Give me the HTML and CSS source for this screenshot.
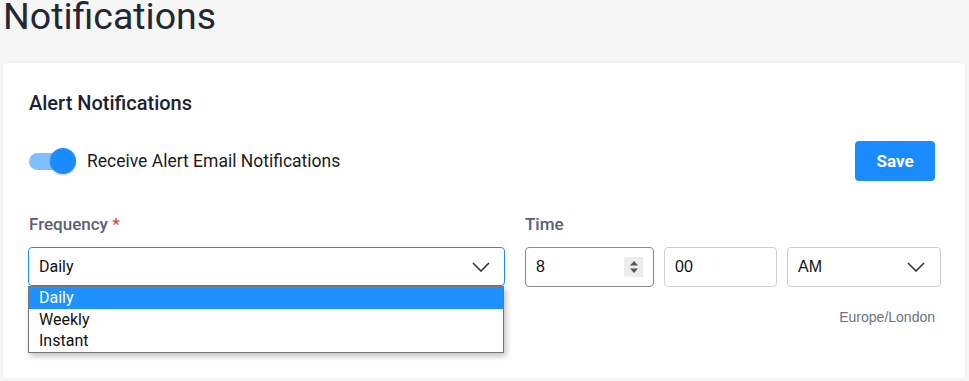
FILE: index.html
```html
<!DOCTYPE html>
<html lang="en">
<head>
    <meta charset="UTF-8">
    <meta name="viewport" content="width=device-width, initial-scale=1.0">
    <title>Notifications</title>
    <link rel="stylesheet" href="styles.css">
</head>
<body>
    <div class="page">
        <h1 class="page-title">Notifications</h1>

        <div class="card">
            <h2 class="card-title">Alert Notifications</h2>

            <!-- Переключатель + кнопка -->
            <div class="toggle-row">
                <label class="switch">
                    <span class="switch-track"></span>
                    <span class="switch-thumb"></span>
                </label>
                <span class="switch-label">Receive Alert Email Notifications</span>
                <button class="save-button">Save</button>
            </div>

            <div class="fields">
                <div class="field">
                    <div class="field-label">Frequency <span class="required">*</span></div>
                    <div class="select-wrap">
                        <div class="select select-open">
                            <span>Daily</span>
                            <svg class="chevron" width="18" height="10" viewBox="0 0 18 10"><path d="M1 1l8 8 8-8" fill="none" stroke="#333" stroke-width="1.6"/></svg>
                        </div>
                        <ul class="dropdown">
                            <li class="active">Daily</li>
                            <li>Weekly</li>
                            <li>Instant</li>
                        </ul>
                    </div>
                </div>

                <div class="field">
                    <div class="field-label">Time</div>
                    <div class="time-row">
                        <div class="input input-hour">
                            <span>8</span>
                            <span class="spinner">
                                <svg width="10" height="14" viewBox="0 0 10 14"><path d="M5 1L9 5.5H1z M5 13L1 8.5h8z" fill="#555"/></svg>
                            </span>
                        </div>
                        <div class="input input-min"><span>00</span></div>
                        <div class="input input-ampm">
                            <span>AM</span>
                            <svg class="chevron" width="18" height="10" viewBox="0 0 18 10"><path d="M1 1l8 8 8-8" fill="none" stroke="#333" stroke-width="1.6"/></svg>
                        </div>
                    </div>
                    <div class="timezone">Europe/London</div>
                </div>
            </div>
        </div>
    </div>
</body>
</html>
```

FILE: styles.css
```css
:root {
    --primary-color: #1a8cff;
    --track-color: #80bfff;
    --text-color: #1f2430;
    --label-color: #5b6075;
    --border-color: #cfcfcf;
    --background-color: #f6f6f6;
}

body {
    font-family: 'Roboto', sans-serif;
    margin: 0;
    padding: 0;
    background-color: var(--background-color);
    color: var(--text-color);
}

.page {
    padding: 0 4px 0 3px;
}

.page-title {
    margin: 0;
    padding-top: 1px;
    font-size: 37.5px;
    font-weight: 400;
    line-height: 30px;
    height: 62px;
    color: #222731;
}

/* Карточка */
.card {
    background: white;
    border-radius: 4px;
    box-shadow: 0 0 3px rgba(0,0,0,0.08);
    padding: 26px 26px 0 26px;
    height: 289px;
}

.card-title {
    margin: 0;
    font-size: 20px;
    font-weight: 500;
    line-height: 28px;
    color: #1c2230;
}

.toggle-row {
    display: flex;
    align-items: center;
    margin-top: 24px;
    height: 40px;
}

.switch {
    position: relative;
    width: 48px;
    height: 26px;
    margin-right: 10px;
}

.switch-track {
    position: absolute;
    left: 0;
    top: 5px;
    width: 40px;
    height: 17px;
    border-radius: 9px;
    background: var(--track-color);
}

.switch-thumb {
    position: absolute;
    left: 21px;
    top: 0;
    width: 26px;
    height: 26px;
    border-radius: 50%;
    background: var(--primary-color);
    box-shadow: 0 1px 2px rgba(0,0,0,0.25);
}

.switch-label {
    font-size: 17.5px;
    color: #1b1b1b;
}

.save-button {
    margin-left: auto;
    margin-right: 4px;
    width: 80px;
    height: 40px;
    background: var(--primary-color);
    color: white;
    border: none;
    border-radius: 4px;
    font-family: 'Roboto', sans-serif;
    font-size: 17px;
    font-weight: 700;
}

/* Поля */
.fields {
    display: grid;
    grid-template-columns: 476px 416px;
    gap: 20px;
    margin-top: 31px;
}

.field-label {
    font-size: 17px;
    line-height: 24px;
    color: var(--label-color);
    margin-bottom: 11px;
    font-weight: 500;
}

.required {
    color: #e53935;
}

.select-wrap {
    position: relative;
    margin-left: -1px;
}

.select,
.input {
    box-sizing: border-box;
    display: flex;
    align-items: center;
    justify-content: space-between;
    height: 40px;
    padding: 0 14px 0 10px;
    border: 1px solid var(--border-color);
    border-radius: 4px;
    background: white;
    font-size: 16px;
    color: #111;
}

.select-open {
    border-color: var(--primary-color);
    height: 39px;
}

.dropdown {
    position: absolute;
    top: 39px;
    left: 0;
    width: 476px;
    box-sizing: border-box;
    margin: 0;
    padding: 0;
    list-style: none;
    background: white;
    border: 1px solid #767676;
    box-shadow: 2px 3px 6px rgba(0,0,0,0.25);
    z-index: 2;
}

.dropdown li {
    height: 21.7px;
    line-height: 21px;
    padding-left: 10px;
    font-size: 16px;
    color: #111;
}

.dropdown li.active {
    background: #1e90ff;
    color: white;
}

.time-row {
    display: flex;
    gap: 10px;
}

.input {
    font-family: 'Liberation Sans', Arial, sans-serif;
}

.input-hour {
    width: 129px;
    border-color: #8a8a8a;
    padding-right: 10px;
}

.input-min {
    width: 113px;
}

.input-ampm {
    width: 154px;
    padding-right: 15px;
}

.spinner {
    display: flex;
    align-items: center;
    justify-content: center;
    width: 19px;
    height: 20px;
    background: #ececec;
}

.timezone {
    margin-top: 22px;
    padding-right: 6px;
    text-align: right;
    font-family: 'Liberation Sans', Arial, sans-serif;
    font-size: 14px;
    color: #6b7280;
}
```
